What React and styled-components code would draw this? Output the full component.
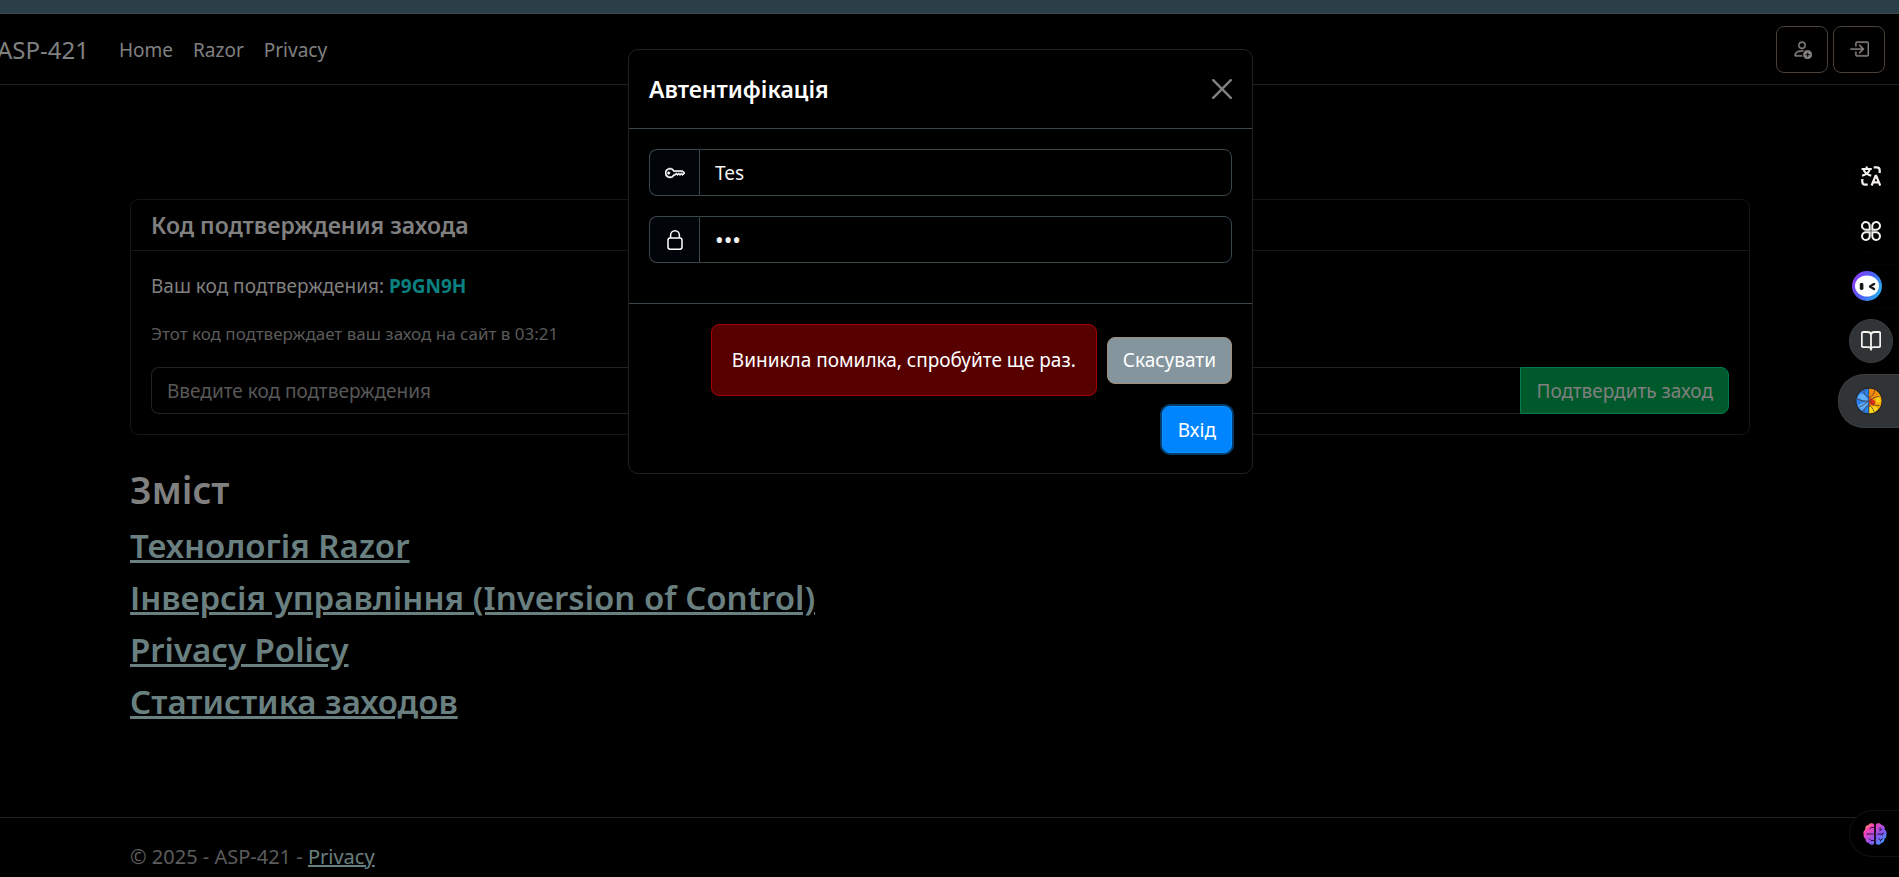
import React from "react";
import styled, { createGlobalStyle, css } from "styled-components";
import { BsKey, BsPersonAdd, BsBoxArrowInRight } from "react-icons/bs";

const GlobalStyle = createGlobalStyle`
  *, *::before, *::after { box-sizing: border-box; }
  body {
    margin: 0;
    background: #000;
    color: #808080;
    font-family: "Noto Sans", "Open Sans", sans-serif;
    font-size: 19px;
    line-height: 30px;
  }
  h2, h3, h5, p, ul { margin: 0; padding: 0; }
  button, input { font: inherit; }
`;

const Page = styled.div`
  position: relative;
  display: flex;
  flex-direction: column;
  height: 100vh;
  overflow: hidden;
`;

const TopStrip = styled.div`
  flex: none;
  height: 14px;
  background: #2b3f49;
  border-bottom: 1px solid #44484a;
`;

const Shell = styled.div`
  flex: 1;
  display: flex;
  flex-direction: column;
  margin-left: -19px;
`;

const Navbar = styled.header`
  display: flex;
  align-items: center;
  height: 71px;
  padding: 0 14px 0 16px;
  border-bottom: 1px solid #1a2226;
`;

const Brand = styled.a`
  margin-right: 20px;
  padding-top: 2px;
  font-size: 24px;
  color: #808080;
  text-decoration: none;
`;

const NavLinks = styled.nav`
  display: flex;
  flex: 1;
`;

const NavLink = styled.a`
  padding: 12px 10px 10px;
  color: #808080;
  text-decoration: none;
`;

const NavActions = styled.div`
  display: flex;
  gap: 5px;
`;

const IconButton = styled.button`
  display: flex;
  align-items: center;
  justify-content: center;
  width: 52px;
  height: 47px;
  padding: 0;
  border: 1px solid #4a4037;
  border-radius: 8px;
  background: transparent;
  color: #85827f;
  svg { width: 20px; height: 20px; stroke: currentColor; stroke-width: 0.3; }
`;

const Container = styled.div`
  width: 100%;
  max-width: 1650px;
  margin: 0 auto;
  padding: 0 15px;
`;

const Main = styled(Container)`
  flex: 1;
  padding-top: 114px;
`;

const Card = styled.section`
  margin-bottom: 30px;
  border: 1px solid #151515;
  border-radius: 8px;
`;

const CardHeader = styled.div`
  padding: 10px 20px;
  border-bottom: 1px solid #151515;
`;

const CardTitle = styled.h5`
  font-size: 23px;
  font-weight: 600;
`;

const CardBody = styled.div`
  display: flex;
  flex-direction: column;
  gap: 20px;
  padding: 20px;
`;

const Code = styled.strong`
  color: #0b8080;
`;

const Note = styled.p`
  font-size: 17px;
  line-height: 26px;
  color: #5a5a5a;
`;

const InputGroup = styled.div`
  display: flex;
  height: 47px;
`;

const field = css`
  flex: 1;
  min-width: 0;
  height: 47px;
  padding: 0 15px;
  background: #000;
  outline: none;
`;

const CodeInput = styled.input`
  ${field}
  border: 1px solid #1f2325;
  border-right: 0;
  border-radius: 8px 0 0 8px;
  color: #808080;
  &::placeholder { color: #585858; opacity: 1; }
`;

const ConfirmButton = styled.button`
  padding: 0 15px;
  border: 1px solid #047a50;
  border-radius: 0 8px 8px 0;
  background: #00592b;
  color: #808080;
`;

const Heading = styled.h2`
  margin-bottom: 10px;
  font-size: 37px;
  line-height: 50px;
  font-weight: 600;
`;

const Topic = styled.h3`
  margin-bottom: 10px;
  font-size: 33px;
  line-height: 42px;
  font-weight: 600;
  a { text-decoration-thickness: 3px; }
`;

const Link = styled.a`
  color: #6a8080;
  text-decoration-thickness: 2px;
`;

const Footer = styled.footer`
  height: 60px;
  border-top: 1px solid #222;
  color: #5c5c5c;
  font-size: 20px;
  line-height: 78px;
`;

const Overlay = styled.div`
  position: absolute;
  inset: 49px 0 auto -18px;
  display: flex;
  justify-content: center;
`;

const Modal = styled.form`
  width: 625px;
  border: 1px solid #22221e;
  border-radius: 10px;
  background: #000;
  color: #fff;
`;

const ModalHeader = styled.div`
  display: flex;
  align-items: center;
  justify-content: space-between;
  height: 79px;
  padding: 0 20px;
  border-bottom: 1px solid #3d494f;
`;

const ModalTitle = styled.h5`
  font-size: 23px;
  font-weight: 600;
`;

const CloseButton = styled.button`
  display: flex;
  padding: 0;
  border: 0;
  background: none;
  color: #808080;
  svg { width: 20px; height: 20px; }
`;

const ModalBody = styled.div`
  display: flex;
  flex-direction: column;
  gap: 20px;
  padding: 20px 20px 40px;
`;

const Addon = styled.label`
  display: flex;
  align-items: center;
  justify-content: center;
  width: 50px;
  border: 1px solid #3a474d;
  border-radius: 8px 0 0 8px;
  border-right: 0;
  background: #010408;
  svg { width: 20px; height: 20px; }
`;

const KeyIcon = styled(BsKey)`
  stroke: currentColor;
  stroke-width: 0.4;
`;

const ModalInput = styled.input`
  ${field}
  border: 1px solid #3a474d;
  border-radius: 0 8px 8px 0;
  color: #f4f4f4;
  &[type="password"] { font-size: 23px; }
`;

const ModalFooter = styled.div`
  display: flex;
  flex-wrap: wrap;
  align-items: center;
  justify-content: flex-end;
  gap: 10px;
  padding: 20px;
  border-top: 1px solid #3d494f;
`;

const Alert = styled.div`
  padding: 20px;
  border: 1px solid #a80000;
  border-radius: 8px;
  background: #560000;
`;

const Button = styled.button`
  height: 47px;
  padding: 0 15px;
  border: 1px solid ${(p) => (p.$primary ? "#0a95ff" : "#a08c78")};
  border-radius: 8px;
  background: ${(p) => (p.$primary ? "#0085ff" : "#84959e")};
  color: #fff;
  box-shadow: ${(p) => (p.$primary ? "0 0 0 2px #063a6b" : "none")};
`;

const SideRail = styled.aside`
  position: absolute;
  top: 154px;
  right: 0;
  display: flex;
  flex-direction: column;
  align-items: flex-end;
  gap: 11px;
`;

const RailButton = styled.button`
  display: flex;
  align-items: center;
  justify-content: center;
  width: 44px;
  height: 44px;
  margin-right: 6px;
  padding: 0;
  border: 1px solid ${(p) => (p.$filled ? "#3c3f41" : "#050505")};
  border-radius: 50%;
  background: ${(p) => (p.$filled ? "#303436" : "transparent")};
  color: #f4f2ee;
`;

const tabTones = {
  filled: { border: "#3c3f41", background: "#303436" },
  outline: { border: "#111", background: "#000" },
  plain: { border: "#040404", background: "#000" },
};

const RailTab = styled.button`
  display: flex;
  align-items: center;
  width: ${(p) => p.$width}px;
  height: ${(p) => p.$height}px;
  padding: 0 0 0 ${(p) => p.$inset}px;
  border: 1px solid ${(p) => tabTones[p.$tone].border};
  border-right: 0;
  border-radius: 26px 0 0 26px;
  background: ${(p) => tabTones[p.$tone].background};
`;

const BottomTab = styled.div`
  position: absolute;
  right: 0;
  bottom: 20px;
`;

const CloseIcon = () => (
  <svg viewBox="0 0 20 20" fill="none" stroke="currentColor" strokeWidth="2.4" strokeLinecap="round">
    <path d="M1.200 1.200 18.800 18.800M18.800 1.200 1.200 18.800" />
  </svg>
);

const LockIcon = () => (
  <svg viewBox="0 0 20 20" fill="none" stroke="currentColor" strokeWidth="1.500">
    <path d="M5.600 8V5.200a4.400 4.400 0 0 1 8.800 0V8" />
    <rect x="3" y="8" width="14" height="11.200" rx="2.200" />
  </svg>
);

const TranslateIcon = () => (
  <svg width="20" height="20" viewBox="0 0 20 20" fill="none" stroke="currentColor" strokeWidth="2.200">
    <path d="M.6 3h10.200M5.700.4V3M2.600 3.200c.8 3 3.400 5.300 7.600 6.500M8.800 3.200C8 6.200 5.300 8.500 1 9.700" />
    <path d="M12.700 1.300h3a3 3 0 0 1 3 3V7M1.300 13v2.700a3 3 0 0 0 3 3h2.400" />
    <path d="m10.600 19.500 4-9.600h.6l4 9.600M12 16.300h5.800" />
  </svg>
);

const CloverIcon = () => (
  <svg width="20" height="20" viewBox="0 0 20 20" fill="none" stroke="currentColor" strokeWidth="2">
    <path d="M8.700 8.700H5a3.850 3.850 0 1 1 3.700-3.700z" />
    <path d="M11.300 8.700V5A3.850 3.850 0 1 1 15 8.700z" />
    <path d="M8.700 11.300V15A3.850 3.850 0 1 1 5 11.300z" />
    <path d="M11.300 11.300H15a3.850 3.850 0 1 1-3.700 3.700z" />
  </svg>
);

const RobotIcon = () => (
  <svg width="30" height="30" viewBox="0 0 30 30">
    <defs>
      <linearGradient id="robot" x1="0" y1=".3" x2="1" y2=".8">
        <stop offset="0" stopColor="#8a3df2" />
        <stop offset=".5" stopColor="#4a63f5" />
        <stop offset="1" stopColor="#23b5e8" />
      </linearGradient>
    </defs>
    <circle cx="15" cy="15" r="15" fill="url(#robot)" />
    <ellipse cx="15" cy="15" rx="12" ry="10.500" fill="#fff" />
    <rect x="7.800" y="12" width="3.600" height="7" rx="1.400" fill="#161616" />
    <path d="m22 13-4 2.500 4 2.500" fill="none" stroke="#161616" strokeWidth="2.400" strokeLinecap="round" strokeLinejoin="round" />
  </svg>
);

const BookIcon = () => (
  <svg width="20" height="20" viewBox="0 0 20 20" fill="none" stroke="currentColor" strokeWidth="1.800" strokeLinejoin="round">
    <path d="M10 3.600C9.600 1.900 8.500 1 6.700 1H2.300C1.400 1 .8 1.600.8 2.400v12.200c0 .9.600 1.500 1.500 1.500h5.100c1.400 0 2.200.5 2.600 1.700.4-1.200 1.200-1.700 2.600-1.700h5.100c.9 0 1.500-.6 1.500-1.500V2.400c0-.8-.6-1.400-1.500-1.400h-4.400c-1.800 0-2.900.9-3.300 2.600zM10 3.600v16" />
  </svg>
);

const ColorBrainIcon = () => (
  <svg width="28" height="28" viewBox="0 0 28 28">
    <circle cx="14" cy="14" r="13.500" fill="#25221f" />
    <path d="M13.600 1.800v24.400A12.200 12.200 0 0 1 13.600 1.800z" fill="#2a7fe8" />
    <path d="M14.400 1.800v24.400a12.200 12.200 0 0 0 0-24.400z" fill="#f5a800" />
    <path d="M14.400 1.800c4 0 7.500 2 9.300 5.200L18.500 12l-4.100 1z" fill="#f58a0c" />
    <path d="M14.400 10.500 21 14.500l-2.500 4.500-4.100-2z" fill="#e0301e" />
    <path d="M14.400 20c3.500-1.500 6.500-.5 8.500 2-2 2.500-5 4.200-8.500 4.200z" fill="#f9d71c" />
    <path d="M22 9c2 1 3.500 3 3.800 5.500-2 1.500-4 1.500-5.300.5z" fill="#f9cf18" />
    <path d="M5.500 6.500c4 0 6.500 3.500 8 7.500-4 0-8-1-11-3.500zM2.800 18.500c3-2.500 6.800-3.500 10.500-3.500-1 4-4 7.500-7.300 8z" fill="#5eaefa" />
    <path d="M2.500 12c4 2 7 2.200 11 2M4 20c3-1 6-3 9.500-6M9 3.500C8.500 7 10.500 9 13.600 10M9 25c-.5-3 1.500-5 4.600-6M19.500 3.500c-.5 3.500-2 5.500-5.100 7M24.500 9.500c-4 0-7 1.500-10 4.500M14.400 14c3 3 6 5 10 4.500M14.400 18.500c2 1 4 3.500 4.500 6" fill="none" stroke="#4b3b35" strokeWidth=".8" />
  </svg>
);

const NeonBrainIcon = () => (
  <svg width="24" height="22" viewBox="0 0 24 22">
    <defs>
      <linearGradient id="neon" x1="0" y1="0" x2="1" y2="1">
        <stop offset="0" stopColor="#ffb01f" />
        <stop offset=".25" stopColor="#f742b8" />
        <stop offset=".6" stopColor="#8a55ef" />
        <stop offset="1" stopColor="#1cb2fa" />
      </linearGradient>
    </defs>
    <path
      fill="url(#neon)"
      d="M11.200 1.800C10-.2 6.300-.1 5.500 2 3.200 2 1.700 4.200 2.400 6.400.7 7.300-.1 9.600.7 11.500c-.5 1.700.3 3.600 1.900 4.500C2.300 18.300 4 20 5.800 20c1.100 2.200 4.300 2.300 5.400.5zM12.800 1.800C14-.2 17.700-.1 18.500 2c2.300 0 3.800 2.200 3.100 4.400 1.700.9 2.500 3.200 1.700 5.100.5 1.700-.3 3.600-1.900 4.500.3 2.300-1.400 4-3.200 4-1.100 2.200-4.300 2.300-5.400.5z"
    />
    <path
      d="M11.500 4.500H8.300L6.500 6M3.500 11h7M11.500 17.500H8L6 15.500M14.500 11H18l2 1.500M16.500 8l2.500-2M17 4.500V7M21 10l-2.500 1M15.500 15.500l2 1.500 2.500-1.500M17.500 17v1.500"
      fill="none"
      stroke="#2a0f45"
      strokeWidth="1"
    />
  </svg>
);

const topics = [
  "Технологія Razor",
  "Інверсія управління (Inversion of Control)",
  "Privacy Policy",
  "Статистика заходов",
];

export default function App() {
  return (
    <Page>
      <GlobalStyle />
      <TopStrip />
      <Shell>
        <Navbar>
          <Brand href="#">ASP-421</Brand>
          <NavLinks>
            <NavLink href="#">Home</NavLink>
            <NavLink href="#">Razor</NavLink>
            <NavLink href="#">Privacy</NavLink>
          </NavLinks>
          <NavActions>
            <IconButton aria-label="Реєстрація"><BsPersonAdd /></IconButton>
            <IconButton aria-label="Вхід"><BsBoxArrowInRight /></IconButton>
          </NavActions>
        </Navbar>
        <Main as="main">
          <Card>
            <CardHeader>
              <CardTitle>Код подтверждения захода</CardTitle>
            </CardHeader>
            <CardBody>
              <p>Ваш код подтверждения: <Code>P9GN9H</Code></p>
              <Note>Этот код подтверждает ваш заход на сайт в 03:21</Note>
              <InputGroup>
                <CodeInput aria-label="Код подтверждения" placeholder="Введите код подтверждения" />
                <ConfirmButton>Подтвердить заход</ConfirmButton>
              </InputGroup>
            </CardBody>
          </Card>
          <Heading>Зміст</Heading>
          {topics.map((t) => (
            <Topic key={t}><Link href="#">{t}</Link></Topic>
          ))}
        </Main>
        <Footer>
          <Container>© 2025 - ASP-421 - <Link href="#">Privacy</Link></Container>
        </Footer>
      </Shell>

      <Overlay>
        <Modal role="dialog" aria-labelledby="auth-title" onSubmit={(e) => e.preventDefault()}>
          <ModalHeader>
            <ModalTitle id="auth-title">Автентифікація</ModalTitle>
            <CloseButton type="button" aria-label="Закрити"><CloseIcon /></CloseButton>
          </ModalHeader>
          <ModalBody>
            <InputGroup>
              <Addon htmlFor="login" aria-label="Логін"><KeyIcon /></Addon>
              <ModalInput id="login" defaultValue="Tes" />
            </InputGroup>
            <InputGroup>
              <Addon htmlFor="password" aria-label="Пароль"><LockIcon /></Addon>
              <ModalInput id="password" type="password" defaultValue="123" />
            </InputGroup>
          </ModalBody>
          <ModalFooter>
            <Alert role="alert">Виникла помилка, спробуйте ще раз.</Alert>
            <Button type="button">Скасувати</Button>
            <Button type="submit" $primary>Вхід</Button>
          </ModalFooter>
        </Modal>
      </Overlay>

      <SideRail>
        <RailButton aria-label="Перекласти"><TranslateIcon /></RailButton>
        <RailButton aria-label="Застосунки"><CloverIcon /></RailButton>
        <RailTab aria-label="Помічник" $tone="plain" $width={54} $height={44} $inset={6}><RobotIcon /></RailTab>
        <RailButton aria-label="Читання" $filled><BookIcon /></RailButton>
        <RailTab aria-label="Панель" $tone="filled" $width={61} $height={54} $inset={16}><ColorBrainIcon /></RailTab>
      </SideRail>
      <BottomTab>
        <RailTab aria-label="Нотатки" $tone="outline" $width={50} $height={47} $inset={13}><NeonBrainIcon /></RailTab>
      </BottomTab>
    </Page>
  );
}
